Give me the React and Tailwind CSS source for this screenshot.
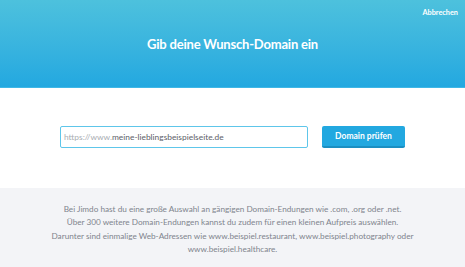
import React from 'react';

const font = { fontFamily: 'Lato, "Open Sans", sans-serif' };

export default function App() {
  return (
    <div className="w-[465px] h-[267px] flex flex-col bg-white overflow-hidden" style={font}>
      <header className="h-[88px] flex flex-col bg-gradient-to-b from-[#4dc1dd] to-[#22a8e0] border-b border-[#3fb7e6]">
        <div className="flex justify-end pt-[8px] pr-[7px]">
          <button className="text-[7.3px] font-bold text-white leading-[9px]">Abbrechen</button>
        </div>
        <h1 className="mt-[18px] text-center text-white font-bold text-[13px] tracking-[-0.2px] leading-[18px]">
          Gib deine Wunsch-Domain ein
        </h1>
      </header>

      <section className="h-[100px] flex items-center justify-center gap-[14px] pb-[2px]">
        <div className="w-[248px] h-[22px] flex items-center px-[3px] border-[1.5px] border-[#5ec6ea] rounded-[2px] text-[8.4px]">
          <span className="text-[#a9adb3]">https://www.</span>
          <span className="text-[#5c6068]">meine-lieblingsbeispielseite.de</span>
        </div>
        <button className="w-[83px] h-[22px] rounded-[2px] bg-[#22a8e0] border-b-2 border-[#1b8fc2] text-white text-[8.5px] font-bold">
          Domain prüfen
        </button>
      </section>

      <section className="flex-1 bg-[#f3f4f7] flex flex-col items-center pt-[15px]">
        <p className="text-center text-[8.2px] leading-[13.3px] text-[#7f848d]">
          Bei Jimdo hast du eine große Auswahl an gängigen Domain-Endungen wie .com, .org oder .net.
          <br />
          Über 300 weitere Domain-Endungen kannst du zudem für einen kleinen Aufpreis auswählen.
          <br />
          Darunter sind einmalige Web-Adressen wie www.beispiel.restaurant, www.beispiel.photography oder
          <br />
          www.beispiel.healthcare.
        </p>
      </section>
    </div>
  );
}
